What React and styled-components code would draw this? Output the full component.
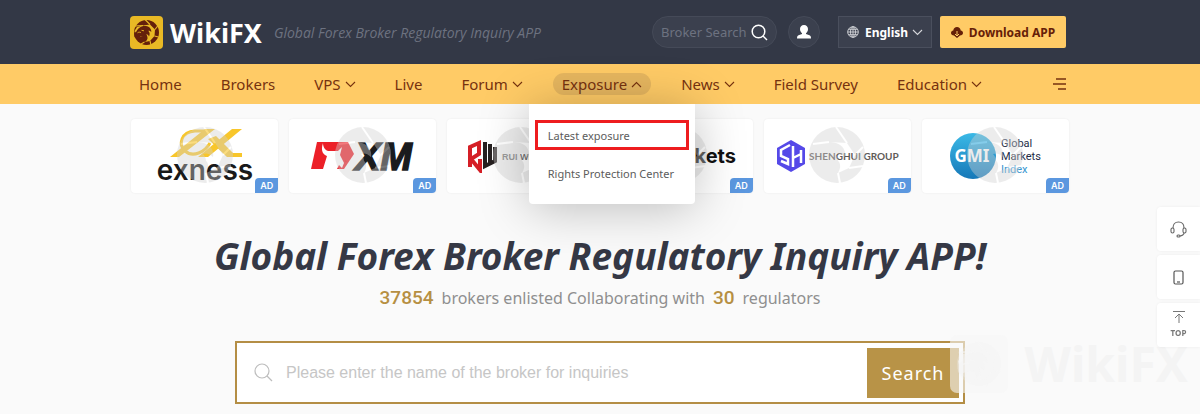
import React from 'react';
import styled, { createGlobalStyle } from 'styled-components';

const GlobalStyle = createGlobalStyle`
* {
box-sizing: border-box;
}
body {
margin: 0;
background: #fafafa;
font-family: 'Noto Sans', 'Open Sans', sans-serif;
overflow-x: hidden;
}
a {
color: inherit;
text-decoration: none;
}
button, input, select {
font-family: inherit;
}
`

const Page = styled.div`
position: relative;
padding-bottom: 10px;
`

const Container = styled.div`
display: flex;
align-items: center;
max-width: 940px;
margin: 0 auto;
`

const Header = styled.header`
background: #333846;
`

const HeaderRow = styled(Container)`
height: 64px;
padding-right: 4px;
`

const Brand = styled.a`
display: flex;
align-items: center;
gap: 7px;
color: #fff;
font: 700 27px 'Noto Sans', sans-serif;
`

const Slogan = styled.span`
flex: 1;
margin-left: 12px;
color: #6d7280;
font-family: 'Open Sans', sans-serif;
font-size: 14px;
font-style: italic;
white-space: nowrap;
`

const QuickSearch = styled.label`
display: flex;
align-items: center;
justify-content: space-between;
width: 125px;
height: 32px;
margin-right: 11px;
padding: 0 8px;
border: 1px solid #454a58;
border-radius: 16px;
background: #3b404e;
`

const QuickInput = styled.input`
width: 88px;
padding: 0;
border: 0;
outline: 0;
background: none;
font-size: 13px;
&::placeholder {
color: #6d7280;
}
`

const UserButton = styled.button`
display: flex;
align-items: center;
justify-content: center;
width: 32px;
height: 32px;
margin-right: 18px;
padding: 0;
border: 1px solid #454a58;
border-radius: 50%;
background: #3b404e;
`

const Language = styled.label`
display: flex;
align-items: center;
width: 94px;
height: 32px;
margin-right: 8px;
padding: 0 8px;
border: 1px solid #4a4f5d;
background: #3b404e;
color: #fff;
`

const LanguageSelect = styled.select`
appearance: none;
flex: 1;
width: 50px;
padding: 0 0 0 6px;
border: 0;
background: none;
color: #fff;
font-size: 12px;
font-weight: 700;
`

const Download = styled.button`
display: flex;
align-items: center;
justify-content: center;
gap: 6px;
width: 126px;
height: 32px;
padding: 0;
border: 0;
border-radius: 2px;
background: #ffcb66;
color: #662008;
font-size: 12px;
font-weight: 700;
white-space: nowrap;
`

const NavBar = styled.nav`
background: #ffcb66;
`

const NavRow = styled(Container)`
height: 40px;
padding-right: 4px;
gap: 21px;
`

const NavItem = styled.div`
position: relative;
`

const NavLink = styled.a`
display: flex;
align-items: center;
gap: 4px;
height: 22px;
padding: 0 9px;
border-radius: 11px;
background: ${props => props.$active ? '#e6b65f' : 'none'};
color: #76320f;
font-size: 15px;
white-space: nowrap;
`

const MoreButton = styled.button`
display: flex;
margin-left: auto;
padding: 0;
border: 0;
background: none;
`

const Menu = styled.div`
position: absolute;
z-index: 2;
top: 31px;
left: -24px;
display: flex;
flex-direction: column;
gap: 8px;
width: 166px;
padding: 16px 6px;
border-radius: 0 0 4px 4px;
background: #fff;
box-shadow: 0 4px 50px rgba(0, 0, 0, 0.25);
`

const MenuLink = styled.a`
display: flex;
align-items: center;
height: 30px;
padding: 0 10px;
border: 3px solid ${props => props.$marked ? '#ee1c1f' : 'transparent'};
color: #5c5c5c;
font-size: 11px;
white-space: nowrap;
`

const Ads = styled.section`
display: grid;
grid-template-columns: repeat(6, 1fr);
gap: 11px;
max-width: 938px;
margin: 15px auto 0;
`

const AdCard = styled.a`
position: relative;
display: flex;
align-items: center;
justify-content: center;
height: 74px;
border-radius: 4px;
background: #fff;
box-shadow: 0 0 2px rgba(0, 0, 0, 0.08);
`

const Stamp = styled.svg`
position: absolute;
top: 8px;
left: calc(50% - 28px);
`

const AdTag = styled.span`
position: absolute;
right: 0;
bottom: 0;
width: 23px;
border-radius: 4px 0 4px 0;
background: #5b97df;
color: #fff;
font: 600 9px/15px Inter, sans-serif;
text-align: center;
`

const Hero = styled.main`
padding: 0 20px;
text-align: center;
`

const Title = styled.h1`
margin: 38px 0 0;
color: #353845;
font-size: 37px;
font-style: italic;
font-weight: 700;
line-height: 50px;
`

const Stats = styled.p`
display: flex;
align-items: center;
justify-content: center;
gap: 8px;
margin: 4px 0 0;
color: #8f8f8f;
font-size: 16px;
line-height: 26px;
`

const Count = styled.strong`
color: #b68f42;
font: 500 19px/26px Roboto, sans-serif;
`

const SearchForm = styled.form`
display: flex;
align-items: center;
max-width: 730px;
height: 63px;
margin: 30px auto 0;
padding: 0 4px 0 17px;
border: 2px solid #b48e45;
background: #fff;
`

const SearchInput = styled.input`
flex: 1;
min-width: 0;
height: 50px;
padding: 0 13px;
border: 0;
outline: 0;
font: 16px 'Liberation Sans', sans-serif;
&::placeholder {
color: #c6c6c6;
}
`

const SearchButton = styled.button`
width: 92px;
height: 50px;
padding: 0;
border: 0;
background: #b89347;
color: #fff;
font-size: 18px;
letter-spacing: 1px;
`

const SideBar = styled.aside`
position: fixed;
z-index: 3;
top: 207px;
right: 0;
display: flex;
flex-direction: column;
gap: 4px;
`

const SideButton = styled.button`
display: flex;
flex-direction: column;
align-items: center;
justify-content: center;
gap: 4px;
width: 43px;
height: 44px;
padding: 0;
border: 0;
border-radius: 4px 0 0 4px;
background: #fff;
box-shadow: 0 0 3px rgba(0, 0, 0, 0.06);
color: #777;
font-size: 8px;
font-weight: 700;
line-height: 12px;
`

const Watermark = styled.div`
position: absolute;
right: 12px;
bottom: 21px;
display: flex;
align-items: center;
gap: 17px;
color: #f4f4f4;
font-size: 48px;
font-weight: 700;
line-height: 40px;
pointer-events: none;
`

const Chevron = ({ up, color }) => (
    <svg width="11" height="7" viewBox="0 0 11 7" fill="none" stroke={color || '#76320f'} strokeWidth="1.1">
        <path d={up ? 'M1 6 5.5 1.5 10 6' : 'M1 1 5.5 5.5 10 1'} />
    </svg>
)

const Eagle = ({ size, back, ink }) => (
    <svg width={size} height={size} viewBox="0 0 33 33">
        <rect width="33" height="33" rx="4" fill={back} />
        <circle cx="16.5" cy="16.5" r="12.5" fill={ink} />
        <path d="M13 9.5 20 8.5 25 13.500 24.500 20 20 25 14.500 26C17.500 24.500 18.500 22 16.500 19L6 22 4.500 15 7 11Z" fill={back} />
        <path d="M6.500 15.500C8 11.500 12 9.500 16 10C19.500 10.500 21.500 13 21.300 16C20.300 14.800 19.300 14.500 18.300 14.700C20 16.500 20 18.500 19 20.500C18.400 19 17.500 18.300 16.300 18.200C17.400 20.500 16.800 22.500 15 24.500C15 21.500 13.500 20.500 11.500 20.500C9 20.500 8.800 22.500 9.500 25L4.500 21C4 17 5.500 15 8.500 15Z" fill={ink} />
        <path d="M7.500 16.800C8.500 16 10 16 11 16.600M11.500 14.300 14 14.800" fill="none" stroke={back} strokeWidth="0.900" />
        <path d="M5 10 13 9.500M15 3.500 20 8.500M28 9.500 25 13.500M28.500 21 24.500 20M21 29 20 25M11 28 14.500 26" stroke={back} strokeWidth="1.100" />
    </svg>
)

const ApertureStamp = () => (
    <Stamp width="56" height="56" viewBox="0 0 56 56" opacity="0.4">
        <path fillRule="evenodd" fill="#d2d2d2" d="M28 0a28 28 0 1 0 0 56a28 28 0 1 0 0-56M20 15 38 16 46 28 40 41 29 46C34 38 30 31 22 31L11 35 9 25Z" />
        <path fill="#d2d2d2" d="M4 25C9 17 18 13 27 16C34 18 37 24 36 30C32 26 29 26 26 27C31 32 29 39 25 44C25 35 19 33 13 37Z" />
        <path d="M4 17 20 15M27 0 38 16M54 20 46 28M54 39 40 41M31 56 29 46" stroke="#fff" strokeWidth="2" />
    </Stamp>
)

const ExnessLogo = () => (
    <svg width="104" height="60" viewBox="-4 0 104 60">
        <path d="M13 31H22L58 3H48Z" fill="#f8c62b" />
        <path d="M52 5H38C24 6 21 18 28 25C36 32 48 26 53 17" fill="none" stroke="#f8c62b" strokeWidth="3" />
        <path d="M75 3H85L51 31H41ZM51 13 59 10 76 27H85V31H70Z" fill="#f8c62b" />
        <text x="48" y="54" textAnchor="middle" fontFamily="Inter" fontWeight="600" fontSize="28" fill="#191919">exness</text>
    </svg>
)

const XmLogo = () => (
    <svg width="116" height="36" viewBox="-5 0 116 36">
        <path d="M7 4H38L44 16 34 31H1Z" fill="#ec2028" />
        <path d="M13 5C10 14 14 17 17 18L13 31H27L29 27 32 30 34 25 30 17 32 9 28 13H18C15 12 13 9 13 5Z" fill="#fff" />
        <text x="45" y="32" fontFamily="Liberation Sans" fontWeight="700" fontStyle="italic" fontSize="38" fill="#1a1b1d" stroke="#1a1b1d" strokeWidth="1.500">XM</text>
    </svg>
)

const RuiLogo = () => (
    <svg width="108" height="34" viewBox="0 0 108 34">
        <g fill="none" strokeWidth="4">
            <path d="M3 28V8L12 4V15L4 20 13 31V20" stroke="#d51f26" />
            <path d="M18 3V27L28 22V8M23 5V24" stroke="#262020" />
        </g>
        <text x="35" y="21" fontFamily="Liberation Sans" fontWeight="700" fontSize="9" fill="#777">RUI WIN</text>
    </svg>
)

const MarketsLogo = () => (
    <svg width="114" height="34" viewBox="0 0 114 34">
        <text x="114" y="24" textAnchor="end" fontFamily="Inter" fontWeight="700" fontSize="20" fill="#111">markets</text>
    </svg>
)

const ShenghuiLogo = () => (
    <svg width="132" height="34" viewBox="-6 0 132 34">
        <path d="M14 1 28 9V25L14 33 0 25V9Z" fill="#5549e8" />
        <path d="M13 6 4 11V17L11 20V25L4 22M16 7V28M24 11V24M16 19 24 15" fill="none" stroke="#fff" strokeWidth="2.500" />
        <text x="32" y="21" fontFamily="Lato" fontWeight="700" fontSize="10" fill="#5f5b58">SHENGHUI GROUP</text>
    </svg>
)

const GmiLogo = () => (
    <svg width="94" height="48" viewBox="-2 0 94 48">
        <linearGradient id="gmi" x2="0" y2="1">
            <stop stopColor="#3bb9e6" />
            <stop offset="1" stopColor="#1678b8" />
        </linearGradient>
        <circle cx="23" cy="24" r="23" fill="url(#gmi)" />
        <text x="22" y="30" textAnchor="middle" fontFamily="Noto Sans" fontWeight="700" fontSize="17" fill="#fff">GMI</text>
        <g fontFamily="Roboto" fontSize="11" fill="#222b45">
            <text x="51" y="15">Global</text>
            <text x="51" y="28">Markets</text>
            <text x="51" y="41" fill="#3494cf">Index</text>
        </g>
    </svg>
)

const navItems = [
    { label: 'Home' },
    { label: 'Brokers' },
    { label: 'VPS', arrow: true },
    { label: 'Live' },
    { label: 'Forum', arrow: true },
    { label: 'Exposure', arrow: true, open: true },
    { label: 'News', arrow: true },
    { label: 'Field Survey' },
    { label: 'Education', arrow: true },
]

const ads = [
    { name: 'exness', Logo: ExnessLogo },
    { name: 'XM', Logo: XmLogo },
    { name: 'RUI WIN', Logo: RuiLogo },
    { name: 'markets', Logo: MarketsLogo },
    { name: 'SHENGHUI GROUP', Logo: ShenghuiLogo },
    { name: 'GMI', Logo: GmiLogo },
]

const App = () => (
    <Page>
        <GlobalStyle />
        <Header>
            <HeaderRow>
                <Brand href="#"><Eagle size="33" back="#e9b925" ink="#64200b" />WikiFX</Brand>
                <Slogan>Global Forex Broker Regulatory Inquiry APP</Slogan>
                <QuickSearch>
                    <QuickInput placeholder="Broker Search" aria-label="Broker Search" />
                    <svg width="17" height="17" viewBox="0 0 17 17" fill="none" stroke="#fff" strokeWidth="1.500">
                        <circle cx="7.500" cy="7.500" r="6.300" />
                        <path d="m12 12 4 4" />
                    </svg>
                </QuickSearch>
                <UserButton aria-label="Account">
                    <svg width="14" height="14" viewBox="0 0 14 14" fill="#fff">
                        <path d="M7 0C4.500 0 3 1.700 3 4C3 6 4 7.500 5 8.300V9L1.500 10.300C.5 10.700 0 11.500 0 13.500H14C14 11.500 13.500 10.700 12.500 10.300L9 9V8.300C10 7.500 11 6 11 4C11 1.700 9.500 0 7 0Z" />
                    </svg>
                </UserButton>
                <Language>
                    <svg width="12" height="12" viewBox="0 0 12 12" fill="none" stroke="#d5d6da" strokeWidth="0.900">
                        <circle cx="6" cy="6" r="5.300" />
                        <ellipse cx="6" cy="6" rx="2.500" ry="5.300" />
                        <path d="M6 .7V11.300M.7 6H11.300M1.500 3.300H10.500M1.500 8.700H10.500" />
                    </svg>
                    <LanguageSelect aria-label="Language">
                        <option>English</option>
                    </LanguageSelect>
                    <Chevron color="#d5d6da" />
                </Language>
                <Download>
                    <svg width="12" height="11" viewBox="0 0 12 11">
                        <path d="M3 8.500C1.200 8.500 0 7.500 0 6C0 4.600 1 3.700 2.300 3.500C2.500 1.400 4 0 6 0S9.500 1.400 9.700 3.500C11 3.700 12 4.600 12 6C12 7.500 10.800 8.500 9 8.500L6 11Z" fill="#662008" />
                        <path d="M6 4V9M4 7 6 9 8 7" fill="none" stroke="#ffcb66" />
                    </svg>
                    Download APP
                </Download>
            </HeaderRow>
        </Header>
        <NavBar>
            <NavRow>
                {navItems.map(item => (
                    <NavItem key={item.label}>
                        <NavLink href="#" $active={item.open}>
                            {item.label}
                            {item.arrow && <Chevron up={item.open} />}
                        </NavLink>
                        {item.open && (
                            <Menu>
                                <MenuLink href="#" $marked>Latest exposure</MenuLink>
                                <MenuLink href="#">Rights Protection Center</MenuLink>
                            </Menu>
                        )}
                    </NavItem>
                ))}
                <MoreButton aria-label="More">
                    <svg width="13" height="12" viewBox="0 0 13 12" stroke="#76320f" strokeWidth="1.500">
                        <path d="M3 1H13M0 6H13M5 11H13" />
                    </svg>
                </MoreButton>
            </NavRow>
        </NavBar>
        <Ads>
            {ads.map(({ name, Logo }) => (
                <AdCard href="#" key={name} aria-label={name}>
                    <Logo />
                    <ApertureStamp />
                    <AdTag>AD</AdTag>
                </AdCard>
            ))}
        </Ads>
        <Hero>
            <Title>Global Forex Broker Regulatory Inquiry APP!</Title>
            <Stats>
                <Count>37854</Count>
                <span>brokers enlisted Collaborating with</span>
                <Count>30</Count>
                <span>regulators</span>
            </Stats>
            <SearchForm>
                <svg width="19" height="19" viewBox="0 0 19 19" fill="none" stroke="#bdbdbd" strokeWidth="1.200">
                    <circle cx="8" cy="8" r="7" />
                    <path d="m13 13 5 5" />
                </svg>
                <SearchInput placeholder="Please enter the name of the broker for inquiries" aria-label="Broker name" />
                <SearchButton type="button">Search</SearchButton>
            </SearchForm>
        </Hero>
        <Watermark>
            <Eagle size="58" back="rgba(246, 246, 246, 0.6)" ink="rgba(242, 242, 242, 0.3)" />
            WikiFX
        </Watermark>
        <SideBar>
            <SideButton aria-label="Support">
                <svg width="17" height="17" viewBox="0 0 17 17" fill="none" stroke="#666" strokeWidth="1.100">
                    <path d="M3 7C3 3.500 5 1 8.500 1S14 3.500 14 7M14 12C14 13.500 12 15 10 15" />
                    <rect x="1" y="7" width="3" height="5" rx="1.500" />
                    <rect x="13" y="7" width="3" height="5" rx="1.500" />
                    <rect x="7" y="14" width="3" height="2" rx="1" />
                </svg>
            </SideButton>
            <SideButton aria-label="Mobile">
                <svg width="11" height="15" viewBox="0 0 11 15" fill="none" stroke="#555" strokeWidth="1.200">
                    <rect x="1" y="1" width="9" height="13" rx="1.500" />
                    <path d="M4 12H7" />
                </svg>
            </SideButton>
            <SideButton>
                <svg width="12" height="12" viewBox="0 0 12 12" fill="none" stroke="#777">
                    <path d="M0 .5H12M6 12V3M2 7 6 3 10 7" />
                </svg>
                TOP
            </SideButton>
        </SideBar>
    </Page>
)

export default App;
